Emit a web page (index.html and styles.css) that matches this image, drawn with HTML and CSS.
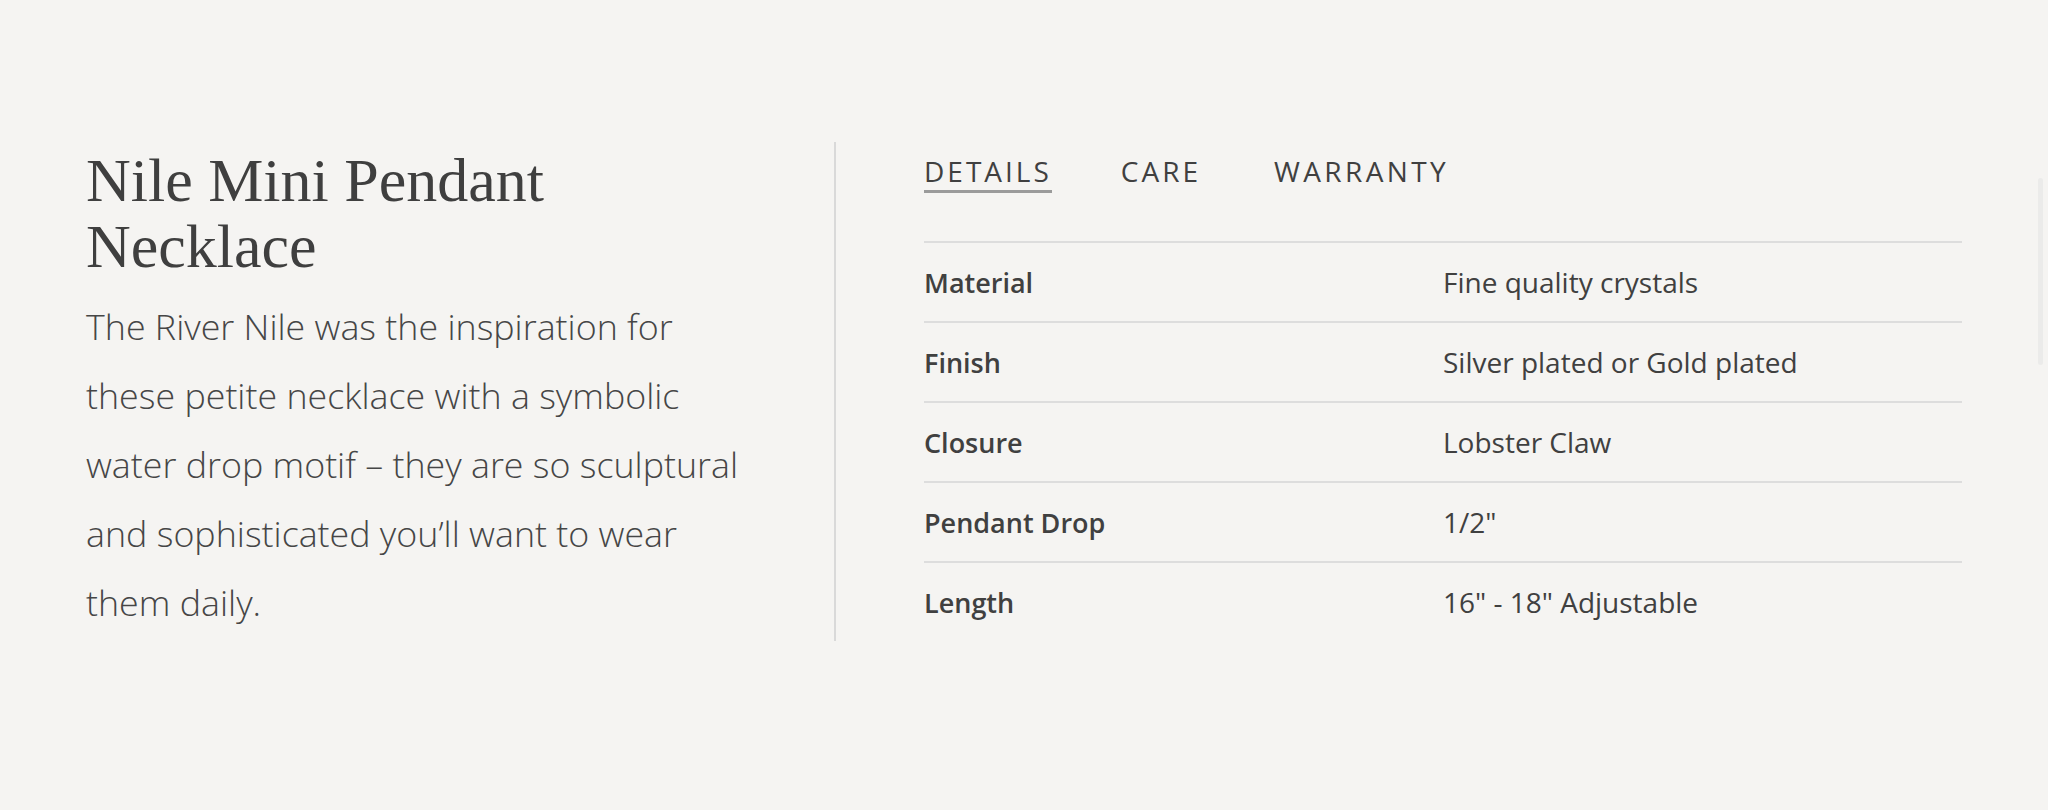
FILE: index.html
```html
<!DOCTYPE html>
<html lang="en">
<head>
<meta charset="utf-8">
<title>Nile Mini Pendant Necklace</title>
<link rel="stylesheet" href="styles.css">
</head>
<body>
<main class="product">
  <section class="intro">
    <h1 class="title">Nile Mini Pendant Necklace</h1>
    <p class="desc">The River Nile was the inspiration for these petite necklace with a symbolic water drop motif – they are so sculptural and sophisticated you’ll want to wear them daily.</p>
  </section>
  <section class="info">
    <nav class="tabs">
      <a class="tab tab-active">DETAILS</a>
      <a class="tab">CARE</a>
      <a class="tab">WARRANTY</a>
    </nav>
    <div class="specs">
      <div class="spec-row"><span class="spec-label">Material</span><span class="spec-value">Fine quality crystals</span></div>
      <div class="spec-row"><span class="spec-label">Finish</span><span class="spec-value">Silver plated or Gold plated</span></div>
      <div class="spec-row"><span class="spec-label">Closure</span><span class="spec-value">Lobster Claw</span></div>
      <div class="spec-row"><span class="spec-label">Pendant Drop</span><span class="spec-value">1/2"</span></div>
      <div class="spec-row"><span class="spec-label">Length</span><span class="spec-value">16" - 18" Adjustable</span></div>
    </div>
  </section>
</main>
<div class="scroll-thumb"></div>
</body>
</html>
```
FILE: styles.css
```css
html, body {
  margin: 0;
  padding: 0;
  background: #f5f4f2;
  color: #3f3f3f;
}

.product {
  display: flex;
  align-items: stretch;
  padding: 142px 86px 0;
}

.intro {
  width: 660px;
  flex: none;
  padding-right: 88px;
  border-right: 2px solid #d9d9d9;
}

.title {
  margin: 0;
  padding-top: 5px;
  font-family: "Liberation Serif", serif;
  font-weight: 400;
  font-size: 62px;
  line-height: 66px;
  color: #3f3f3f;
}

.desc {
  margin: 13px 0 0;
  font-family: "Open Sans", sans-serif;
  font-weight: 300;
  font-size: 35.8px;
  line-height: 69px;
  color: #464646;
}

.info {
  flex: 1;
  padding-left: 88px;
}

.tabs {
  display: flex;
  padding-top: 15px;
  border-bottom: 2px solid #dddddd;
  padding-bottom: 48px;
}

.tab {
  font-family: "Open Sans", sans-serif;
  font-size: 28px;
  line-height: 28px;
  letter-spacing: 3px;
  color: #404040;
  padding-bottom: 5px;
  border-bottom: 3px solid transparent;
}

.tab + .tab {
  margin-left: 69px;
}

.tab:last-child {
  margin-left: 73px;
  letter-spacing: 3.4px;
}

.tab-active {
  border-bottom-color: #9b9b9b;
}

.spec-row {
  display: grid;
  grid-template-columns: 1fr 1fr;
  align-items: center;
  height: 78px;
  font-family: "Open Sans", sans-serif;
  color: #404040;
}

.spec-row + .spec-row {
  border-top: 2px solid #dddddd;
}

.spec-label {
  font-size: 27px;
  font-weight: 600;
}

.spec-value {
  font-size: 28px;
  font-weight: 400;
}

.scroll-thumb {
  position: fixed;
  right: 5px;
  top: 178px;
  width: 5px;
  height: 187px;
  border-radius: 3px;
  background: #ebebea;
}
```
